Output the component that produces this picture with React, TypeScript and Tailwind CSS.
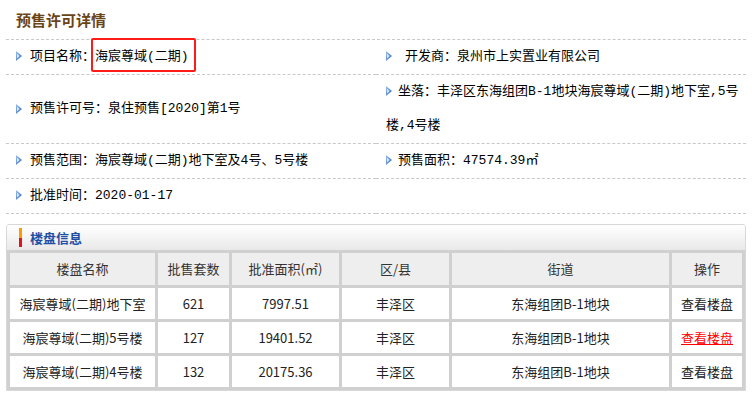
import React from "react";

const infoFont = {
  fontFamily: '"Liberation Mono", "Noto Sans CJK SC", monospace',
};

function Arrow() {
  return (
    <svg width="6" height="10" viewBox="0 0 6 10" className="inline-block align-[-1px]">
      <defs>
        <linearGradient id="ag" x1="0" y1="0" x2="1" y2="1">
          <stop offset="0" stopColor="#9cc2ee" />
          <stop offset="1" stopColor="#2d62b5" />
        </linearGradient>
      </defs>
      <polygon points="0,0 6,5 0,10" fill="url(#ag)" />
      <polygon points="1,2.5 3.6,5 1,7.5" fill="#d8e8fb" />
    </svg>
  );
}

const buildings = [
  { name: "海宸尊域(二期)地下室", count: "621", area: "7997.51", district: "丰泽区", street: "东海组团B-1地块", hot: false },
  { name: "海宸尊域(二期)5号楼", count: "127", area: "19401.52", district: "丰泽区", street: "东海组团B-1地块", hot: true },
  { name: "海宸尊域(二期)4号楼", count: "132", area: "20175.36", district: "丰泽区", street: "东海组团B-1地块", hot: false },
];

export default function App() {
  return (
    <div className="relative h-[396px] w-[752px] overflow-hidden bg-white text-black">
      <h2
        className="h-[39px] pl-4 pt-[11px] text-[15px] font-bold leading-[18px] text-[#6b4416]"
        style={{ fontFamily: '"Noto Sans CJK SC", sans-serif' }}
      >
        预售许可详情
      </h2>

      <div
        className="mx-[6px] grid grid-cols-[370px_1fr] border-t border-dashed border-[#c8c8c8] text-[13px] leading-[34px]"
        style={infoFont}
      >
        <div className="border-b border-dashed border-[#c8c8c8] pl-[10px]">
          <Arrow />
          <span className="ml-2">项目名称：海宸尊域(二期)</span>
        </div>
        <div className="border-b border-dashed border-[#c8c8c8] pl-[10px]">
          <Arrow />
          <span className="ml-[13px]">开发商：泉州市上实置业有限公司</span>
        </div>

        <div className="flex items-center border-b border-dashed border-[#c8c8c8] pl-[10px]">
          <Arrow />
          <span className="ml-2">预售许可号：泉住预售[2020]第1号</span>
        </div>
        <div className="border-b border-dashed border-[#c8c8c8] pl-[10px] whitespace-nowrap">
          <Arrow />
          <span className="ml-[6px]">坐落：丰泽区东海组团B-1地块海宸尊域(二期)地下室,5号</span>
          <br />
          楼,4号楼
        </div>

        <div className="border-b border-dashed border-[#c8c8c8] pl-[10px]">
          <Arrow />
          <span className="ml-2">预售范围：海宸尊域(二期)地下室及4号、5号楼</span>
        </div>
        <div className="border-b border-dashed border-[#c8c8c8] pl-[10px]">
          <Arrow />
          <span className="ml-[6px]">
            预售面积：47574.39㎡
          </span>
        </div>

        <div className="border-b border-dashed border-[#c8c8c8] pl-[10px]">
          <Arrow />
          <span className="ml-2">批准时间：2020-01-17</span>
        </div>
        <div className="border-b border-dashed border-[#c8c8c8]" />
      </div>

      {/* highlight box around the project name */}
      <div className="absolute left-[91px] top-[38px] h-[34px] w-[105px] rounded-[2px] border-2 border-[#ff1a1a]" />

      <div
        className="mx-[6px] mt-[10px] overflow-hidden rounded-t-[3px] border border-[#d8d8d8]"
        style={{ fontFamily: '"Noto Sans CJK SC", sans-serif' }}
      >
        <div className="flex h-[25px] items-center bg-gradient-to-b from-white to-[#e9e9e9] pl-[12px]">
          <div className="flex h-[19px] w-[3px] flex-col">
            <div className="flex-1 bg-[#ff9c00]" />
            <div className="flex-1 bg-[#e0141e]" />
          </div>
          <span className="ml-[8px] text-[13px] font-bold text-[#1f4fa5]">楼盘信息</span>
        </div>

        <table className="w-full table-fixed border-collapse text-center text-[13px] text-[#222]">
          <colgroup>
            <col className="w-[148px]" />
            <col className="w-[74px]" />
            <col className="w-[110px]" />
            <col className="w-[110px]" />
            <col className="w-[220px]" />
            <col />
          </colgroup>
          <thead>
            <tr className="h-[35px] bg-[#eeeeee]">
              {["楼盘名称", "批售套数", "批准面积(㎡)", "区/县", "街道", "操作"].map((h) => (
                <th key={h} className="border-[3px] border-[#d0d0d0] font-normal text-[#333]">
                  {h}
                </th>
              ))}
            </tr>
          </thead>
          <tbody>
            {buildings.map((b) => (
              <tr key={b.name} className="h-[34px]">
                <td className="border-[3px] border-[#d0d0d0]">{b.name}</td>
                <td className="border-[3px] border-[#d0d0d0]">{b.count}</td>
                <td className="border-[3px] border-[#d0d0d0]">{b.area}</td>
                <td className="border-[3px] border-[#d0d0d0]">{b.district}</td>
                <td className="border-[3px] border-[#d0d0d0]">{b.street}</td>
                <td className="border-[3px] border-[#d0d0d0]">
                  <a
                    href="#"
                    className={b.hot ? "text-[#ff0000] underline" : "text-[#222] no-underline"}
                  >
                    查看楼盘
                  </a>
                </td>
              </tr>
            ))}
          </tbody>
        </table>
      </div>
    </div>
  );
}
